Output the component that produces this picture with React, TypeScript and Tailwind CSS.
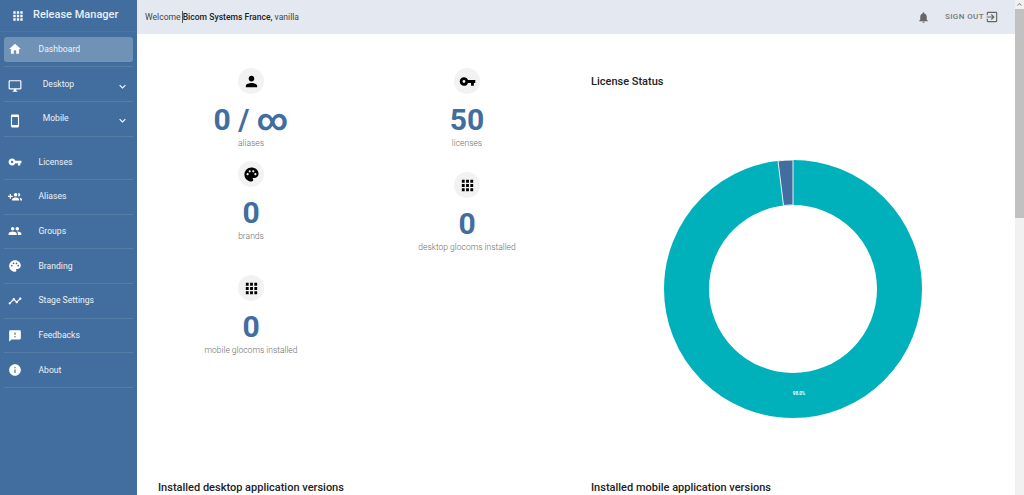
import type { ReactNode } from 'react'
import {
  MdApps,
  MdChevronRight,
  MdExitToApp,
  MdGroup,
  MdHome,
  MdInfo,
  MdKeyboardArrowDown,
  MdNotifications,
  MdOutlineDesktopWindows,
  MdOutlineSmartphone,
  MdPalette,
  MdPerson,
  MdSmsFailed,
  MdTimeline,
  MdVpnKey,
} from 'react-icons/md'

function GroupAddIcon() {
  return (
    <svg viewBox="0 0 24 24" width="1em" height="1em" fill="currentColor">
      <path d="M8 10H5V7H3v3H0v2h3v3h2v-3h3v-2zm10 1c1.66 0 2.99-1.34 2.99-3S19.66 5 18 5c-.32 0-.63.05-.91.14.57.81.9 1.79.9 2.86s-.34 2.04-.9 2.86c.28.09.59.14.91.14zm-5 0c1.66 0 2.99-1.34 2.99-3S14.66 5 13 5s-3 1.34-3 3 1.34 3 3 3zm6.62 2.16c.83.73 1.38 1.66 1.38 2.84v2h3v-2c0-1.54-2.37-2.49-4.38-2.84zM13 13c-2 0-6 1-6 3v2h12v-2c0-2-4-3-6-3z" />
    </svg>
  )
}

const navItems = [
  { label: 'Dashboard', icon: <MdHome />, active: true },
  { label: 'Desktop', icon: <MdOutlineDesktopWindows />, sub: true },
  { label: 'Mobile', icon: <MdOutlineSmartphone />, sub: true },
  { label: 'Licenses', icon: <MdVpnKey />, extra: true },
  { label: 'Aliases', icon: <GroupAddIcon /> },
  { label: 'Groups', icon: <MdGroup /> },
  { label: 'Branding', icon: <MdPalette /> },
  { label: 'Stage Settings', icon: <MdTimeline /> },
  { label: 'Feedbacks', icon: <MdSmsFailed /> },
  { label: 'About', icon: <MdInfo /> },
]

function Sidebar() {
  return (
    <aside className="w-[137px] shrink-0 bg-[#416e9e] text-white">
      <div className="flex h-[32px] items-center pl-[11px] border-b border-white/5">
        <MdApps className="text-[14px]" />
        <span className="ml-[8px] text-[11px] font-medium text-[#e8eef5]">Release Manager</span>
      </div>
      <nav className="px-1 pt-[0.6px]">
        {navItems.map((item) => (
          <div
            key={item.label}
            className={`flex items-center border-b border-white/10 ${item.extra ? 'h-[43.3px] pt-[8.6px]' : 'h-[34.7px]'}`}
          >
            <div
              className={`flex h-[25.5px] flex-1 items-center rounded-[3px] pl-[2px] ${item.active ? 'bg-[#6f92b6]' : ''}`}
            >
              <span className={`flex w-[18px] justify-center text-[14px] text-white ${item.sub ? 'translate-y-[2px]' : ''}`}>
                {item.icon}
              </span>
              <span className={`text-[8.6px] text-[#eef2f7] ${item.sub ? 'ml-[18.7px]' : 'ml-[14.5px]'}`}>
                {item.label}
              </span>
              {item.sub && <MdKeyboardArrowDown className="ml-auto mr-[4px] translate-y-[2px] text-[13px]" />}
            </div>
          </div>
        ))}
      </nav>
    </aside>
  )
}

function Stat({ icon, value, label, className }: { icon: ReactNode; value: string; label: string; className: string }) {
  return (
    <div className={`flex flex-col items-center ${className}`}>
      <div className="flex h-[26px] w-[26px] items-center justify-center rounded-full bg-[#f2f2f2] text-[17px] text-black">
        {icon}
      </div>
      <div className="mt-[7px] text-[30px] leading-[38px] font-bold text-[#416e9e]">{value}</div>
      <div className="-mt-[2px] text-[8.5px] leading-[12px] font-light text-[#6b6b6b]">{label}</div>
    </div>
  )
}

function Donut() {
  return (
    <svg width="258" height="258" viewBox="0 0 258 258" className="mt-[69.5px] ml-[73px] block">
      <circle cx="129" cy="129" r="106.5" fill="none" stroke="#00b1bc" strokeWidth="45" />
      <path d="M129 0 A129 129 0 0 0 114 0.9 L119.5 45.5 A84 84 0 0 1 129 45 Z" fill="#416e9e" stroke="#e8f2f4" strokeWidth="1" />
      <text x="135" y="235" textAnchor="middle" fontSize="4.5" fontWeight="700" fill="#ffffff">
        98.0%
      </text>
    </svg>
  )
}

export default function App() {
  return (
    <div className="flex h-screen overflow-hidden bg-white font-['Roboto',sans-serif]">
      <Sidebar />
      <div className="flex min-w-0 flex-1 flex-col">
        <header className="flex h-[34px] shrink-0 items-center bg-[#e4e9f1] pl-[8px] pr-[16px] text-[8.6px] text-[#444]">
          <span>Welcome</span>
          <span className="ml-[1px] border-l border-[#555] font-medium text-[#222]">Bicom Systems France,</span>
          <span className="ml-[2px]">vanilla</span>
          <MdNotifications className="ml-auto text-[13px] text-[#666]" />
          <span className="ml-[14.5px] text-[8px] font-medium tracking-[0.4px] text-[#777]">SIGN OUT</span>
          <MdExitToApp className="ml-[1px] text-[14px] text-[#666]" />
        </header>
        <main className="flex min-h-0 flex-1 pl-[21px]">
          <div className="flex w-[433px] shrink-0 flex-col pt-[34px]">
            <div className="grid w-[404px] -translate-x-[8px] grid-cols-2">
              <div className="flex flex-col">
                <Stat icon={<MdPerson />} value="0 / ∞" label="aliases" className="" />
                <Stat icon={<MdPalette />} value="0" label="brands" className="mt-[12px]" />
                <Stat icon={<MdApps />} value="0" label="mobile glocoms installed" className="mt-[33px]" />
              </div>
              <div className="flex translate-x-[14px] flex-col">
                <Stat icon={<MdVpnKey />} value="50" label="licenses" className="" />
                <Stat icon={<MdApps />} value="0" label="desktop glocoms installed" className="mt-[23px]" />
              </div>
            </div>
            <h2 className="mt-[123.75px] text-[11px] font-medium text-[#222]">Installed desktop application versions</h2>
          </div>
          <div className="flex-1">
            <h2 className="mt-[40px] text-[11px] font-medium text-[#222]">License Status</h2>
            <Donut />
            <h2 className="mt-[61.75px] text-[11px] font-medium text-[#222]">Installed mobile application versions</h2>
          </div>
        </main>
      </div>
      <div className="flex w-[9px] shrink-0 flex-col bg-[#f1f1f1]">
        <MdChevronRight className="h-[9px] w-[9px] -rotate-90 text-[#777]" />
        <div className="h-[209px] bg-[#c1c1c1]" />
      </div>
    </div>
  )
}
